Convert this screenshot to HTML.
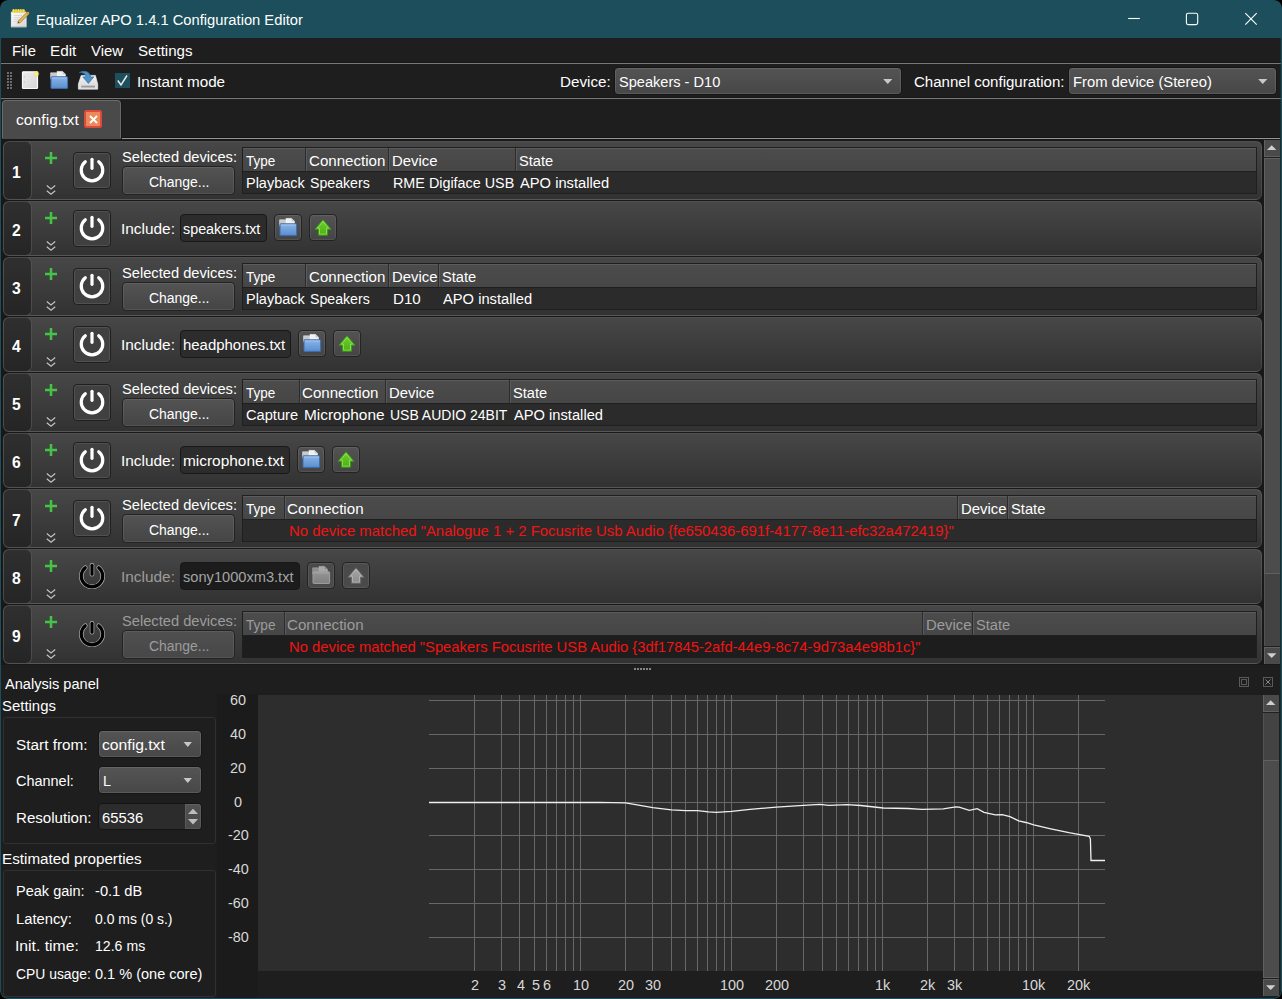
<!DOCTYPE html>
<html><head><meta charset="utf-8"><title>Equalizer APO 1.4.1 Configuration Editor</title>
<style>
html,body{margin:0;padding:0;background:#000;}
body{width:1282px;height:999px;position:relative;overflow:hidden;font-family:"Liberation Sans",sans-serif;}
.t{position:absolute;white-space:nowrap;line-height:20px;height:20px;transform-origin:0 0;}
.b{position:absolute;box-sizing:border-box;}
svg{position:absolute;overflow:visible;}

.row{position:absolute;box-sizing:border-box;border-radius:0 6px 6px 0;border:1px solid rgba(255,255,255,0.09);border-top-color:rgba(255,255,255,0.15);background:linear-gradient(#474747,#323232);}
.num{position:absolute;box-sizing:border-box;border-radius:6px;border:1px solid rgba(255,255,255,0.17);background:linear-gradient(#2f2f2f,#252525);}
.btn{position:absolute;box-sizing:border-box;border-radius:4px;border:1px solid #232323;background:linear-gradient(#535353,#454545);box-shadow:inset 0 0 0 1px rgba(255,255,255,0.08);}
.pbtn{position:absolute;box-sizing:border-box;border-radius:4px;border:1px solid #1f1f1f;background:#404040;box-shadow:inset 0 0 0 1px rgba(255,255,255,0.09);}
.inp{position:absolute;box-sizing:border-box;border-radius:4px;border:1px solid #181818;background:#2c2c2c;}
.tbl{position:absolute;box-sizing:border-box;border:1px solid #1f1f1f;background:#2b2b2b;}
.th{position:absolute;left:0;top:0;right:0;height:24px;background:linear-gradient(#4c4c4c,#464646);border-bottom:1px solid #1f1f1f;box-sizing:border-box;box-shadow:inset 0 1px 0 rgba(255,255,255,0.09);}
.sep{position:absolute;top:0;width:1px;height:23px;background:#2c2c2c;border-right:1px solid #5a5a5a;}
.combo{position:absolute;box-sizing:border-box;border-radius:4px;border:1px solid #151515;background:linear-gradient(#545454,#474747);box-shadow:inset 0 0 0 1px rgba(255,255,255,0.10);}

</style></head><body>
<div class="b" style="left:0;top:0;width:1282px;height:999px;background:#1e1e1e;border-radius:8px;overflow:hidden;"></div>
<div class="b" style="left:0;top:0;width:1282px;height:38px;background:#1c4f5b;border-radius:8px 8px 0 0;"></div>
<svg style="left:10px;top:8px" width="20" height="20" viewBox="0 0 20 20">
<defs><linearGradient id="gnote" x1="0" y1="0" x2="1" y2="1"><stop offset="0" stop-color="#ffffff"/><stop offset="1" stop-color="#d4d4d4"/></linearGradient></defs>
<rect x="1.3" y="4.2" width="14.8" height="14.6" fill="url(#gnote)" stroke="#f2f2f2" stroke-width="0.8"/>
<path d="M1.3 18.9 H16.1" stroke="#a8a8a8" stroke-width="0.8"/>
<g stroke="#cfcfcf" stroke-width="0.7"><line x1="3.6" y1="7.5" x2="12" y2="7.5"/><line x1="3.6" y1="9.5" x2="10" y2="9.5"/><line x1="3.6" y1="11.5" x2="8.5" y2="11.5"/><line x1="3.6" y1="13.5" x2="7" y2="13.5"/></g>
<rect x="2" y="1.6" width="13.2" height="3" rx="0.8" fill="#e3c41f"/>
<g stroke="#f7e873" stroke-width="0.9"><line x1="3.6" y1="1" x2="3.6" y2="4.6"/><line x1="6" y1="1" x2="6" y2="4.6"/><line x1="8.4" y1="1" x2="8.4" y2="4.6"/><line x1="10.8" y1="1" x2="10.8" y2="4.6"/><line x1="13.2" y1="1" x2="13.2" y2="4.6"/></g>
<path d="M8.6 14.4 L17.9 5.1" stroke="#b98a32" stroke-width="3.2" stroke-linecap="butt"/>
<path d="M8.8 14.2 L17.9 5.1" stroke="#e2bd6a" stroke-width="1.6"/>
<path d="M7.4 15.6 L8 13.2 L9.8 15 Z" fill="#7a4e10"/>
<circle cx="18" cy="5" r="1.3" fill="#d39a2a"/>
</svg>
<div class="t" style="left:36.19px;top:10px;font-size:15.5px;color:#fff;transform:scaleX(0.9500);">Equalizer APO 1.4.1 Configuration Editor</div>
<svg style="left:1120px;top:0" width="150" height="38" viewBox="0 0 150 38">
<g stroke="#fff" stroke-width="1.1" fill="none">
<line x1="8.2" y1="18.5" x2="19.8" y2="18.5"/>
<rect x="66.4" y="13.3" width="11.3" height="11.3" rx="1.8"/>
<path d="M125.3 13.2 L136.7 24.6 M136.7 13.2 L125.3 24.6"/>
</g></svg>
<div class="t" style="left:12.08px;top:41px;font-size:15.5px;color:#fff;transform:scaleX(0.9559);">File</div>
<div class="t" style="left:50.34px;top:41px;font-size:15.5px;color:#fff;transform:scaleX(0.9872);">Edit</div>
<div class="t" style="left:90.73px;top:41px;font-size:15.5px;color:#fff;transform:scaleX(0.9593);">View</div>
<div class="t" style="left:137.51px;top:41px;font-size:15.5px;color:#fff;transform:scaleX(0.9737);">Settings</div>
<div class="b" style="left:1px;top:62px;width:1280px;height:1px;background:#171717;"></div>
<div class="b" style="left:1px;top:63px;width:1280px;height:1px;background:#787878;"></div>
<svg style="left:7px;top:72px" width="6" height="18" viewBox="0 0 6 18" shape-rendering="crispEdges"><g fill="#6c6c6c"><rect x="0" y="0" width="2" height="2"/><rect x="0" y="3" width="2" height="2"/><rect x="0" y="6" width="2" height="2"/><rect x="0" y="9" width="2" height="2"/><rect x="0" y="12" width="2" height="2"/><rect x="0" y="15" width="2" height="2"/><rect x="3" y="0" width="2" height="2"/><rect x="3" y="3" width="2" height="2"/><rect x="3" y="6" width="2" height="2"/><rect x="3" y="9" width="2" height="2"/><rect x="3" y="12" width="2" height="2"/><rect x="3" y="15" width="2" height="2"/></g></svg>
<svg style="left:22px;top:71px" width="16" height="18" viewBox="0 0 16 18">
<defs><linearGradient id="gdoc" x1="0" y1="0" x2="1" y2="1"><stop offset="0" stop-color="#ececec"/><stop offset="1" stop-color="#d6d6d6"/></linearGradient>
<radialGradient id="gglow"><stop offset="0" stop-color="#fffde0"/><stop offset="0.45" stop-color="#f2e66a"/><stop offset="1" stop-color="#f2e66a" stop-opacity="0"/></radialGradient></defs>
<rect x="0.5" y="0.8" width="15" height="16.7" rx="0.8" fill="url(#gdoc)" stroke="#fbfbfb" stroke-width="1.2"/>
<circle cx="14.3" cy="2.8" r="3.4" fill="url(#gglow)"/>
<rect x="1.6" y="5.5" width="1.2" height="0.8" fill="#aaa"/><rect x="1.6" y="10.5" width="1.2" height="0.8" fill="#aaa"/>
</svg>
<svg style="left:50.3px;top:70.5px" width="18" height="18" viewBox="0 0 18 18">
<defs><linearGradient id="gf1" x1="0" y1="0" x2="0" y2="1"><stop offset="0" stop-color="#8ab4e6"/><stop offset="1" stop-color="#5b8fd0"/></linearGradient></defs>
<path d="M0.6 1.8 H6.5 V8 H0.6 Z" fill="#c9c9c9" stroke="#e6e6e6" stroke-width="0.6"/>
<path d="M7 0.4 H12.6 L15.4 3.2 V8 H7 Z" fill="#f1f1f1" stroke="#ffffff" stroke-width="0.6"/>
<path d="M12.6 0.4 V3.2 H15.4 Z" fill="#c4c4c4"/>
<rect x="1" y="5.8" width="16.6" height="11.6" rx="0.6" fill="url(#gf1)" stroke="#3c6db4" stroke-width="1"/>
<path d="M2 7 H16.6" stroke="#b9d3f3" stroke-width="0.9" opacity="0.8"/>
</svg>
<svg style="left:78px;top:70px" width="20" height="20" viewBox="0 0 20 20">
<defs><linearGradient id="gtray" x1="0" y1="0" x2="0" y2="1"><stop offset="0" stop-color="#f4f4f4"/><stop offset="1" stop-color="#d2d2d2"/></linearGradient></defs>
<path d="M3.2 5.4 H17.4 L19.7 14 V19.2 H0.4 V14 Z" fill="url(#gtray)" stroke="#f8f8f8" stroke-width="0.6"/>
<path d="M0.8 14.2 H19.3 V18.9 H0.8 Z" fill="#e1e1e1"/>
<rect x="3.2" y="15.6" width="13.8" height="1.9" fill="#9c9c9c"/>
<path d="M1.4 2.6 C5 0.4 11.6 0.6 12.6 6.9 H15.8 L10.4 13.4 L4.8 6.9 H8 C7.6 3.6 4.6 2.4 1.4 2.6 Z" fill="#4f92c8" stroke="#2f6ea6" stroke-width="0.7"/>
</svg>
<div class="b" style="left:115px;top:73px;width:15px;height:15px;background:#1d4f5c;"></div>
<svg style="left:115px;top:73px" width="15" height="15" viewBox="0 0 15 15"><path d="M2.8 7.5 L6 12 L12 2.5" stroke="#e8e8e8" stroke-width="1.5" fill="none"/></svg>
<div class="t" style="left:136.69px;top:72px;font-size:15.5px;color:#fff;transform:scaleX(0.9830);">Instant mode</div>
<div class="t" style="left:560.35px;top:72px;font-size:15.5px;color:#fff;transform:scaleX(0.9796);">Device:</div>
<div class="combo" style="left:614px;top:67px;width:288px;height:28px"></div>
<div class="t" style="left:618.84px;top:72px;font-size:15.5px;color:#fff;transform:scaleX(0.9400);">Speakers - D10</div>
<svg style="left:883px;top:79px" width="9.5" height="5" viewBox="0 0 11 6"><path d="M0 0 H11 L5.5 6 Z" fill="#c8c8c8"/></svg>
<div class="t" style="left:913.84px;top:72px;font-size:15.5px;color:#fff;transform:scaleX(0.9705);">Channel configuration:</div>
<div class="combo" style="left:1068px;top:67px;width:209px;height:28px"></div>
<div class="t" style="left:1073.09px;top:72px;font-size:15.5px;color:#fff;transform:scaleX(0.9537);">From device (Stereo)</div>
<svg style="left:1258px;top:79px" width="9.5" height="5" viewBox="0 0 11 6"><path d="M0 0 H11 L5.5 6 Z" fill="#c8c8c8"/></svg>
<div class="b" style="left:1px;top:97px;width:1280px;height:1px;background:#171717;"></div>
<div class="b" style="left:1px;top:98px;width:1280px;height:1px;background:#787878;"></div>
<div class="b" style="left:2px;top:100px;width:119px;height:38px;background:#4a4a4a;border:1px solid #6a6a6a;border-bottom:none;border-radius:4px 4px 0 0;"></div>
<div class="t" style="left:15.53px;top:110px;font-size:15.5px;color:#fff;transform:scaleX(1.0121);">config.txt</div>
<div class="b" style="left:84px;top:110px;width:18px;height:18px;background:#ea8a5c;border:2px solid #dc4a3c;border-radius:2.5px;"></div>
<svg style="left:84.5px;top:110.5px" width="17" height="17" viewBox="0 0 17 17"><path d="M5 5 L12 12 M12 5 L5 12" stroke="#fff" stroke-width="1.8" fill="none"/></svg>
<div class="b" style="left:121px;top:137px;width:1159px;height:1px;background:#151515;"></div>
<div class="b" style="left:121px;top:100px;width:1px;height:38px;background:#171717;"></div>
<div class="b" style="left:122px;top:138px;width:1158px;height:1px;background:#969696;"></div>
<div class="b" style="left:2px;top:138px;width:119px;height:1px;background:#4a4a4a;"></div>
<div class="b" style="left:1px;top:139px;width:1279px;height:526px;background:#181818;"></div>
<div class="row" style="left:26px;top:141px;width:1236px;height:59px"></div>
<div class="num" style="left:3px;top:141px;width:29px;height:59px"></div>
<div class="t" style="left:12.07px;top:162px;font-size:16.5px;color:#fff;transform:scaleX(0.9500);font-weight:bold;">1</div>
<svg style="left:44px;top:151px" width="14" height="14" viewBox="0 0 14 14"><path d="M7 1 V13 M1 7 H13" stroke="#46c246" stroke-width="2.5" fill="none"/></svg>
<svg style="left:45px;top:184.4px" width="12" height="12" viewBox="0 0 12 12"><path d="M1.8 1.5 L6 5 L10.2 1.5 M1.8 6.8 L6 10.3 L10.2 6.8" stroke="#c4c4c4" stroke-width="1.15" fill="none"/></svg>
<div class="pbtn" style="left:73px;top:152px;width:38px;height:37px"></div>
<svg style="left:77.1px;top:155.0px" width="30" height="30" viewBox="0 0 30 30">
<g fill="none" stroke="#fff" stroke-width="3.2" stroke-linecap="round">
<path d="M8.3 6.7 A10.75 10.75 0 1 0 21.7 6.7"/><line x1="15" y1="4.3" x2="15" y2="13.3"/></g></svg>
<div class="t" style="left:121.63px;top:147px;font-size:15.5px;color:#fff;transform:scaleX(0.9467);">Selected devices:</div>
<div class="btn" style="left:122px;top:166px;width:113px;height:29px;"></div>
<div class="t" style="left:148.59px;top:172px;font-size:15.5px;color:#fff;transform:scaleX(0.8998);">Change...</div>
<div class="tbl" style="left:242px;top:147px;width:1015px;height:47px;background:#2b2b2b"><div class="th"></div><div class="sep" style="left:62px"></div><div class="sep" style="left:145px"></div><div class="sep" style="left:272px"></div></div>
<div class="t" style="left:246.30px;top:151px;font-size:15.5px;color:#fff;transform:scaleX(0.8707);">Type</div>
<div class="t" style="left:308.73px;top:151px;font-size:15.5px;color:#fff;transform:scaleX(0.9736);">Connection</div>
<div class="t" style="left:392.28px;top:151px;font-size:15.5px;color:#fff;transform:scaleX(0.9600);">Device</div>
<div class="t" style="left:519.03px;top:151px;font-size:15.5px;color:#fff;transform:scaleX(0.9454);">State</div>
<div class="t" style="left:246.31px;top:173px;font-size:15.5px;color:#fff;transform:scaleX(0.9328);">Playback</div>
<div class="t" style="left:309.86px;top:173px;font-size:15.5px;color:#fff;transform:scaleX(0.9125);">Speakers</div>
<div class="t" style="left:393.02px;top:173px;font-size:15.5px;color:#fff;transform:scaleX(0.9260);">RME Digiface USB</div>
<div class="t" style="left:520.17px;top:173px;font-size:15.5px;color:#fff;transform:scaleX(0.9485);">APO installed</div>
<div class="row" style="left:26px;top:201px;width:1236px;height:55px"></div>
<div class="num" style="left:3px;top:201px;width:29px;height:55px"></div>
<div class="t" style="left:12.38px;top:220px;font-size:16.5px;color:#fff;transform:scaleX(0.9500);font-weight:bold;">2</div>
<svg style="left:44px;top:211px" width="14" height="14" viewBox="0 0 14 14"><path d="M7 1 V13 M1 7 H13" stroke="#46c246" stroke-width="2.5" fill="none"/></svg>
<svg style="left:45px;top:240.4px" width="12" height="12" viewBox="0 0 12 12"><path d="M1.8 1.5 L6 5 L10.2 1.5 M1.8 6.8 L6 10.3 L10.2 6.8" stroke="#c4c4c4" stroke-width="1.15" fill="none"/></svg>
<div class="pbtn" style="left:73px;top:210px;width:38px;height:37px"></div>
<svg style="left:77.1px;top:213.0px" width="30" height="30" viewBox="0 0 30 30">
<g fill="none" stroke="#fff" stroke-width="3.2" stroke-linecap="round">
<path d="M8.3 6.7 A10.75 10.75 0 1 0 21.7 6.7"/><line x1="15" y1="4.3" x2="15" y2="13.3"/></g></svg>
<div class="t" style="left:121.38px;top:219px;font-size:15.5px;color:#fff;transform:scaleX(0.9933);">Include:</div>
<div class="inp" style="left:180px;top:214px;width:87px;height:28px;"></div>
<div class="t" style="left:183.00px;top:219px;font-size:15.5px;color:#fff;transform:scaleX(0.9251);">speakers.txt</div>
<div class="btn" style="left:274px;top:214px;width:28px;height:27px;"></div>
<svg style="left:279px;top:218px" width="18" height="18" viewBox="0 0 18 18">
<defs><linearGradient id="gf2" x1="0" y1="0" x2="0" y2="1"><stop offset="0" stop-color="#8ab4e6"/><stop offset="1" stop-color="#5b8fd0"/></linearGradient></defs>
<path d="M0.6 1.8 H6.5 V8 H0.6 Z" fill="#c9c9c9" stroke="#e6e6e6" stroke-width="0.6"/>
<path d="M7 0.4 H12.6 L15.4 3.2 V8 H7 Z" fill="#f1f1f1" stroke="#ffffff" stroke-width="0.6"/>
<path d="M12.6 0.4 V3.2 H15.4 Z" fill="#c4c4c4"/>
<rect x="1" y="5.8" width="16.6" height="11.6" rx="0.6" fill="url(#gf2)" stroke="#3c6db4" stroke-width="1"/>
<path d="M2 7 H16.6" stroke="#b9d3f3" stroke-width="0.9" opacity="0.8"/>
</svg>
<div class="btn" style="left:309px;top:214px;width:28px;height:27px;"></div>
<svg style="left:314px;top:219.3px" width="18" height="17" viewBox="0 0 18 17"><defs><linearGradient id="gu1" x1="0" y1="0" x2="0" y2="1"><stop offset="0" stop-color="#6ed02e"/><stop offset="1" stop-color="#4cb012"/></linearGradient></defs><path d="M9 0.8 L17 10.2 H13.6 V16.2 H4.4 V10.2 H1 Z" fill="url(#gu1)" stroke="#3c9a14" stroke-width="1" stroke-linejoin="round"/><path d="M9 2.6 L14.6 9.2 H12.5 V15.1 H5.5 V9.2 H3.4 Z" fill="none" stroke="#a2e878" stroke-width="0.9" opacity="0.75"/></svg>
<div class="row" style="left:26px;top:257px;width:1236px;height:59px"></div>
<div class="num" style="left:3px;top:257px;width:29px;height:59px"></div>
<div class="t" style="left:12.44px;top:278px;font-size:16.5px;color:#fff;transform:scaleX(0.9500);font-weight:bold;">3</div>
<svg style="left:44px;top:267px" width="14" height="14" viewBox="0 0 14 14"><path d="M7 1 V13 M1 7 H13" stroke="#46c246" stroke-width="2.5" fill="none"/></svg>
<svg style="left:45px;top:300.4px" width="12" height="12" viewBox="0 0 12 12"><path d="M1.8 1.5 L6 5 L10.2 1.5 M1.8 6.8 L6 10.3 L10.2 6.8" stroke="#c4c4c4" stroke-width="1.15" fill="none"/></svg>
<div class="pbtn" style="left:73px;top:268px;width:38px;height:37px"></div>
<svg style="left:77.1px;top:271.0px" width="30" height="30" viewBox="0 0 30 30">
<g fill="none" stroke="#fff" stroke-width="3.2" stroke-linecap="round">
<path d="M8.3 6.7 A10.75 10.75 0 1 0 21.7 6.7"/><line x1="15" y1="4.3" x2="15" y2="13.3"/></g></svg>
<div class="t" style="left:121.63px;top:263px;font-size:15.5px;color:#fff;transform:scaleX(0.9467);">Selected devices:</div>
<div class="btn" style="left:122px;top:282px;width:113px;height:29px;"></div>
<div class="t" style="left:148.59px;top:288px;font-size:15.5px;color:#fff;transform:scaleX(0.8998);">Change...</div>
<div class="tbl" style="left:242px;top:263px;width:1015px;height:47px;background:#2b2b2b"><div class="th"></div><div class="sep" style="left:62px"></div><div class="sep" style="left:145px"></div><div class="sep" style="left:195px"></div></div>
<div class="t" style="left:246.30px;top:267px;font-size:15.5px;color:#fff;transform:scaleX(0.8707);">Type</div>
<div class="t" style="left:308.73px;top:267px;font-size:15.5px;color:#fff;transform:scaleX(0.9736);">Connection</div>
<div class="t" style="left:392.28px;top:267px;font-size:15.5px;color:#fff;transform:scaleX(0.9600);">Device</div>
<div class="t" style="left:442.03px;top:267px;font-size:15.5px;color:#fff;transform:scaleX(0.9454);">State</div>
<div class="t" style="left:246.31px;top:289px;font-size:15.5px;color:#fff;transform:scaleX(0.9328);">Playback</div>
<div class="t" style="left:309.86px;top:289px;font-size:15.5px;color:#fff;transform:scaleX(0.9125);">Speakers</div>
<div class="t" style="left:392.96px;top:289px;font-size:15.5px;color:#fff;transform:scaleX(0.9752);">D10</div>
<div class="t" style="left:443.17px;top:289px;font-size:15.5px;color:#fff;transform:scaleX(0.9485);">APO installed</div>
<div class="row" style="left:26px;top:317px;width:1236px;height:55px"></div>
<div class="num" style="left:3px;top:317px;width:29px;height:55px"></div>
<div class="t" style="left:12.26px;top:336px;font-size:16.5px;color:#fff;transform:scaleX(0.9500);font-weight:bold;">4</div>
<svg style="left:44px;top:327px" width="14" height="14" viewBox="0 0 14 14"><path d="M7 1 V13 M1 7 H13" stroke="#46c246" stroke-width="2.5" fill="none"/></svg>
<svg style="left:45px;top:356.4px" width="12" height="12" viewBox="0 0 12 12"><path d="M1.8 1.5 L6 5 L10.2 1.5 M1.8 6.8 L6 10.3 L10.2 6.8" stroke="#c4c4c4" stroke-width="1.15" fill="none"/></svg>
<div class="pbtn" style="left:73px;top:326px;width:38px;height:37px"></div>
<svg style="left:77.1px;top:329.0px" width="30" height="30" viewBox="0 0 30 30">
<g fill="none" stroke="#fff" stroke-width="3.2" stroke-linecap="round">
<path d="M8.3 6.7 A10.75 10.75 0 1 0 21.7 6.7"/><line x1="15" y1="4.3" x2="15" y2="13.3"/></g></svg>
<div class="t" style="left:121.38px;top:335px;font-size:15.5px;color:#fff;transform:scaleX(0.9933);">Include:</div>
<div class="inp" style="left:180px;top:330px;width:111px;height:28px;"></div>
<div class="t" style="left:182.96px;top:335px;font-size:15.5px;color:#fff;transform:scaleX(0.9636);">headphones.txt</div>
<div class="btn" style="left:298px;top:330px;width:28px;height:27px;"></div>
<svg style="left:303px;top:334px" width="18" height="18" viewBox="0 0 18 18">
<defs><linearGradient id="gf3" x1="0" y1="0" x2="0" y2="1"><stop offset="0" stop-color="#8ab4e6"/><stop offset="1" stop-color="#5b8fd0"/></linearGradient></defs>
<path d="M0.6 1.8 H6.5 V8 H0.6 Z" fill="#c9c9c9" stroke="#e6e6e6" stroke-width="0.6"/>
<path d="M7 0.4 H12.6 L15.4 3.2 V8 H7 Z" fill="#f1f1f1" stroke="#ffffff" stroke-width="0.6"/>
<path d="M12.6 0.4 V3.2 H15.4 Z" fill="#c4c4c4"/>
<rect x="1" y="5.8" width="16.6" height="11.6" rx="0.6" fill="url(#gf3)" stroke="#3c6db4" stroke-width="1"/>
<path d="M2 7 H16.6" stroke="#b9d3f3" stroke-width="0.9" opacity="0.8"/>
</svg>
<div class="btn" style="left:333px;top:330px;width:28px;height:27px;"></div>
<svg style="left:338px;top:335.3px" width="18" height="17" viewBox="0 0 18 17"><defs><linearGradient id="gu2" x1="0" y1="0" x2="0" y2="1"><stop offset="0" stop-color="#6ed02e"/><stop offset="1" stop-color="#4cb012"/></linearGradient></defs><path d="M9 0.8 L17 10.2 H13.6 V16.2 H4.4 V10.2 H1 Z" fill="url(#gu2)" stroke="#3c9a14" stroke-width="1" stroke-linejoin="round"/><path d="M9 2.6 L14.6 9.2 H12.5 V15.1 H5.5 V9.2 H3.4 Z" fill="none" stroke="#a2e878" stroke-width="0.9" opacity="0.75"/></svg>
<div class="row" style="left:26px;top:373px;width:1236px;height:59px"></div>
<div class="num" style="left:3px;top:373px;width:29px;height:59px"></div>
<div class="t" style="left:12.32px;top:394px;font-size:16.5px;color:#fff;transform:scaleX(0.9500);font-weight:bold;">5</div>
<svg style="left:44px;top:383px" width="14" height="14" viewBox="0 0 14 14"><path d="M7 1 V13 M1 7 H13" stroke="#46c246" stroke-width="2.5" fill="none"/></svg>
<svg style="left:45px;top:416.4px" width="12" height="12" viewBox="0 0 12 12"><path d="M1.8 1.5 L6 5 L10.2 1.5 M1.8 6.8 L6 10.3 L10.2 6.8" stroke="#c4c4c4" stroke-width="1.15" fill="none"/></svg>
<div class="pbtn" style="left:73px;top:384px;width:38px;height:37px"></div>
<svg style="left:77.1px;top:387.0px" width="30" height="30" viewBox="0 0 30 30">
<g fill="none" stroke="#fff" stroke-width="3.2" stroke-linecap="round">
<path d="M8.3 6.7 A10.75 10.75 0 1 0 21.7 6.7"/><line x1="15" y1="4.3" x2="15" y2="13.3"/></g></svg>
<div class="t" style="left:121.63px;top:379px;font-size:15.5px;color:#fff;transform:scaleX(0.9467);">Selected devices:</div>
<div class="btn" style="left:122px;top:398px;width:113px;height:29px;"></div>
<div class="t" style="left:148.59px;top:404px;font-size:15.5px;color:#fff;transform:scaleX(0.8998);">Change...</div>
<div class="tbl" style="left:242px;top:379px;width:1015px;height:47px;background:#2b2b2b"><div class="th"></div><div class="sep" style="left:56px"></div><div class="sep" style="left:142px"></div><div class="sep" style="left:266px"></div></div>
<div class="t" style="left:246.10px;top:383px;font-size:15.5px;color:#fff;transform:scaleX(0.8707);">Type</div>
<div class="t" style="left:302.33px;top:383px;font-size:15.5px;color:#fff;transform:scaleX(0.9749);">Connection</div>
<div class="t" style="left:389.08px;top:383px;font-size:15.5px;color:#fff;transform:scaleX(0.9578);">Device</div>
<div class="t" style="left:512.63px;top:383px;font-size:15.5px;color:#fff;transform:scaleX(0.9454);">State</div>
<div class="t" style="left:245.76px;top:405px;font-size:15.5px;color:#fff;transform:scaleX(0.9447);">Capture</div>
<div class="t" style="left:303.94px;top:405px;font-size:15.5px;color:#fff;transform:scaleX(0.9946);">Microphone</div>
<div class="t" style="left:390.12px;top:405px;font-size:15.5px;color:#fff;transform:scaleX(0.9020);">USB AUDIO 24BIT</div>
<div class="t" style="left:514.17px;top:405px;font-size:15.5px;color:#fff;transform:scaleX(0.9475);">APO installed</div>
<div class="row" style="left:26px;top:433px;width:1236px;height:55px"></div>
<div class="num" style="left:3px;top:433px;width:29px;height:55px"></div>
<div class="t" style="left:12.34px;top:452px;font-size:16.5px;color:#fff;transform:scaleX(0.9500);font-weight:bold;">6</div>
<svg style="left:44px;top:443px" width="14" height="14" viewBox="0 0 14 14"><path d="M7 1 V13 M1 7 H13" stroke="#46c246" stroke-width="2.5" fill="none"/></svg>
<svg style="left:45px;top:472.4px" width="12" height="12" viewBox="0 0 12 12"><path d="M1.8 1.5 L6 5 L10.2 1.5 M1.8 6.8 L6 10.3 L10.2 6.8" stroke="#c4c4c4" stroke-width="1.15" fill="none"/></svg>
<div class="pbtn" style="left:73px;top:442px;width:38px;height:37px"></div>
<svg style="left:77.1px;top:445.0px" width="30" height="30" viewBox="0 0 30 30">
<g fill="none" stroke="#fff" stroke-width="3.2" stroke-linecap="round">
<path d="M8.3 6.7 A10.75 10.75 0 1 0 21.7 6.7"/><line x1="15" y1="4.3" x2="15" y2="13.3"/></g></svg>
<div class="t" style="left:121.38px;top:451px;font-size:15.5px;color:#fff;transform:scaleX(0.9933);">Include:</div>
<div class="inp" style="left:180px;top:446px;width:110px;height:28px;"></div>
<div class="t" style="left:182.98px;top:451px;font-size:15.5px;color:#fff;transform:scaleX(0.9949);">microphone.txt</div>
<div class="btn" style="left:297px;top:446px;width:28px;height:27px;"></div>
<svg style="left:302px;top:450px" width="18" height="18" viewBox="0 0 18 18">
<defs><linearGradient id="gf4" x1="0" y1="0" x2="0" y2="1"><stop offset="0" stop-color="#8ab4e6"/><stop offset="1" stop-color="#5b8fd0"/></linearGradient></defs>
<path d="M0.6 1.8 H6.5 V8 H0.6 Z" fill="#c9c9c9" stroke="#e6e6e6" stroke-width="0.6"/>
<path d="M7 0.4 H12.6 L15.4 3.2 V8 H7 Z" fill="#f1f1f1" stroke="#ffffff" stroke-width="0.6"/>
<path d="M12.6 0.4 V3.2 H15.4 Z" fill="#c4c4c4"/>
<rect x="1" y="5.8" width="16.6" height="11.6" rx="0.6" fill="url(#gf4)" stroke="#3c6db4" stroke-width="1"/>
<path d="M2 7 H16.6" stroke="#b9d3f3" stroke-width="0.9" opacity="0.8"/>
</svg>
<div class="btn" style="left:332px;top:446px;width:28px;height:27px;"></div>
<svg style="left:337px;top:451.3px" width="18" height="17" viewBox="0 0 18 17"><defs><linearGradient id="gu3" x1="0" y1="0" x2="0" y2="1"><stop offset="0" stop-color="#6ed02e"/><stop offset="1" stop-color="#4cb012"/></linearGradient></defs><path d="M9 0.8 L17 10.2 H13.6 V16.2 H4.4 V10.2 H1 Z" fill="url(#gu3)" stroke="#3c9a14" stroke-width="1" stroke-linejoin="round"/><path d="M9 2.6 L14.6 9.2 H12.5 V15.1 H5.5 V9.2 H3.4 Z" fill="none" stroke="#a2e878" stroke-width="0.9" opacity="0.75"/></svg>
<div class="row" style="left:26px;top:489px;width:1236px;height:59px"></div>
<div class="num" style="left:3px;top:489px;width:29px;height:59px"></div>
<div class="t" style="left:12.35px;top:510px;font-size:16.5px;color:#fff;transform:scaleX(0.9500);font-weight:bold;">7</div>
<svg style="left:44px;top:499px" width="14" height="14" viewBox="0 0 14 14"><path d="M7 1 V13 M1 7 H13" stroke="#46c246" stroke-width="2.5" fill="none"/></svg>
<svg style="left:45px;top:532.4px" width="12" height="12" viewBox="0 0 12 12"><path d="M1.8 1.5 L6 5 L10.2 1.5 M1.8 6.8 L6 10.3 L10.2 6.8" stroke="#c4c4c4" stroke-width="1.15" fill="none"/></svg>
<div class="pbtn" style="left:73px;top:500px;width:38px;height:37px"></div>
<svg style="left:77.1px;top:503.0px" width="30" height="30" viewBox="0 0 30 30">
<g fill="none" stroke="#fff" stroke-width="3.2" stroke-linecap="round">
<path d="M8.3 6.7 A10.75 10.75 0 1 0 21.7 6.7"/><line x1="15" y1="4.3" x2="15" y2="13.3"/></g></svg>
<div class="t" style="left:121.63px;top:495px;font-size:15.5px;color:#fff;transform:scaleX(0.9467);">Selected devices:</div>
<div class="btn" style="left:122px;top:514px;width:113px;height:29px;"></div>
<div class="t" style="left:148.59px;top:520px;font-size:15.5px;color:#fff;transform:scaleX(0.8998);">Change...</div>
<div class="tbl" style="left:242px;top:495px;width:1015px;height:47px;background:#2b2b2b"><div class="th"></div><div class="sep" style="left:41px"></div><div class="sep" style="left:714px"></div><div class="sep" style="left:764px"></div></div>
<div class="t" style="left:246.09px;top:499px;font-size:15.5px;color:#fff;transform:scaleX(0.8767);">Type</div>
<div class="t" style="left:287.43px;top:499px;font-size:15.5px;color:#fff;transform:scaleX(0.9762);">Connection</div>
<div class="t" style="left:961.18px;top:499px;font-size:15.5px;color:#fff;transform:scaleX(0.9622);">Device</div>
<div class="t" style="left:1010.83px;top:499px;font-size:15.5px;color:#fff;transform:scaleX(0.9483);">State</div>
<div class="t" style="left:289.38px;top:521px;font-size:15.5px;color:#f01414;transform:scaleX(0.9609);">No device matched &quot;Analogue 1 + 2 Focusrite Usb Audio {fe650436-691f-4177-8e11-efc32a472419}&quot;</div>
<div class="row" style="left:26px;top:549px;width:1236px;height:55px"></div>
<div class="num" style="left:3px;top:549px;width:29px;height:55px"></div>
<div class="t" style="left:12.33px;top:568px;font-size:16.5px;color:#fff;transform:scaleX(0.9500);font-weight:bold;">8</div>
<svg style="left:44px;top:559px" width="14" height="14" viewBox="0 0 14 14"><path d="M7 1 V13 M1 7 H13" stroke="#46c246" stroke-width="2.5" fill="none"/></svg>
<svg style="left:45px;top:588.4px" width="12" height="12" viewBox="0 0 12 12"><path d="M1.8 1.5 L6 5 L10.2 1.5 M1.8 6.8 L6 10.3 L10.2 6.8" stroke="#c4c4c4" stroke-width="1.15" fill="none"/></svg>
<svg style="left:77.1px;top:561.0px" width="30" height="30" viewBox="0 0 30 30">
<g fill="none" stroke="#b2b2b2" stroke-width="4.5" stroke-linecap="round"><path d="M8.3 6.7 A10.75 10.75 0 1 0 21.7 6.7"/><line x1="15" y1="4.3" x2="15" y2="13.3"/></g><g fill="none" stroke="#000" stroke-width="3.1" stroke-linecap="round">
<path d="M8.3 6.7 A10.75 10.75 0 1 0 21.7 6.7"/><line x1="15" y1="4.3" x2="15" y2="13.3"/></g></svg>
<div class="t" style="left:121.38px;top:567px;font-size:15.5px;color:#9c9c9c;transform:scaleX(0.9933);">Include:</div>
<div class="inp" style="left:180px;top:562px;width:120px;height:28px;background:#1c1c1c;"></div>
<div class="t" style="left:182.99px;top:567px;font-size:15.5px;color:#a4a4a4;transform:scaleX(0.9432);">sony1000xm3.txt</div>
<div class="btn" style="left:307px;top:562px;width:28px;height:27px;background:#4a4a4a;"></div>
<svg style="left:312px;top:566px" width="18" height="18" viewBox="0 0 18 18">
<defs><linearGradient id="gf5" x1="0" y1="0" x2="0" y2="1"><stop offset="0" stop-color="#959595"/><stop offset="1" stop-color="#808080"/></linearGradient></defs>
<path d="M0.6 1.8 H6.5 V8 H0.6 Z" fill="#8e8e8e" stroke="#a2a2a2" stroke-width="0.6"/>
<path d="M7 0.4 H12.6 L15.4 3.2 V8 H7 Z" fill="#a8a8a8" stroke="#b4b4b4" stroke-width="0.6"/>
<path d="M12.6 0.4 V3.2 H15.4 Z" fill="#8a8a8a"/>
<rect x="1" y="5.8" width="16.6" height="11.6" rx="0.6" fill="url(#gf5)" stroke="#a0a0a0" stroke-width="1"/>
<path d="M2 7 H16.6" stroke="#adadad" stroke-width="0.9" opacity="0.8"/>
</svg>
<div class="btn" style="left:342px;top:562px;width:28px;height:27px;background:#4a4a4a;"></div>
<svg style="left:347px;top:567.3px" width="18" height="17" viewBox="0 0 18 17"><defs><linearGradient id="gu4" x1="0" y1="0" x2="0" y2="1"><stop offset="0" stop-color="#a6a6a6"/><stop offset="1" stop-color="#8c8c8c"/></linearGradient></defs><path d="M9 0.8 L17 10.2 H13.6 V16.2 H4.4 V10.2 H1 Z" fill="url(#gu4)" stroke="#6a6a6a" stroke-width="1" stroke-linejoin="round"/><path d="M9 2.6 L14.6 9.2 H12.5 V15.1 H5.5 V9.2 H3.4 Z" fill="none" stroke="#bdbdbd" stroke-width="0.9" opacity="0.75"/></svg>
<div class="row" style="left:26px;top:605px;width:1236px;height:59px"></div>
<div class="num" style="left:3px;top:605px;width:29px;height:59px"></div>
<div class="t" style="left:12.36px;top:626px;font-size:16.5px;color:#fff;transform:scaleX(0.9500);font-weight:bold;">9</div>
<svg style="left:44px;top:615px" width="14" height="14" viewBox="0 0 14 14"><path d="M7 1 V13 M1 7 H13" stroke="#46c246" stroke-width="2.5" fill="none"/></svg>
<svg style="left:45px;top:648.4px" width="12" height="12" viewBox="0 0 12 12"><path d="M1.8 1.5 L6 5 L10.2 1.5 M1.8 6.8 L6 10.3 L10.2 6.8" stroke="#c4c4c4" stroke-width="1.15" fill="none"/></svg>
<svg style="left:77.1px;top:619.0px" width="30" height="30" viewBox="0 0 30 30">
<g fill="none" stroke="#b2b2b2" stroke-width="4.5" stroke-linecap="round"><path d="M8.3 6.7 A10.75 10.75 0 1 0 21.7 6.7"/><line x1="15" y1="4.3" x2="15" y2="13.3"/></g><g fill="none" stroke="#000" stroke-width="3.1" stroke-linecap="round">
<path d="M8.3 6.7 A10.75 10.75 0 1 0 21.7 6.7"/><line x1="15" y1="4.3" x2="15" y2="13.3"/></g></svg>
<div class="t" style="left:121.63px;top:611px;font-size:15.5px;color:#9c9c9c;transform:scaleX(0.9467);">Selected devices:</div>
<div class="btn" style="left:122px;top:630px;width:113px;height:29px;background:linear-gradient(#505050,#474747);"></div>
<div class="t" style="left:148.59px;top:636px;font-size:15.5px;color:#9c9c9c;transform:scaleX(0.8998);">Change...</div>
<div class="tbl" style="left:242px;top:611px;width:1015px;height:47px;background:#1d1d1d"><div class="th"></div><div class="sep" style="left:41px"></div><div class="sep" style="left:679px"></div><div class="sep" style="left:729px"></div></div>
<div class="t" style="left:246.09px;top:615px;font-size:15.5px;color:#9c9c9c;transform:scaleX(0.8767);">Type</div>
<div class="t" style="left:287.43px;top:615px;font-size:15.5px;color:#9c9c9c;transform:scaleX(0.9762);">Connection</div>
<div class="t" style="left:926.18px;top:615px;font-size:15.5px;color:#9c9c9c;transform:scaleX(0.9622);">Device</div>
<div class="t" style="left:975.83px;top:615px;font-size:15.5px;color:#9c9c9c;transform:scaleX(0.9454);">State</div>
<div class="t" style="left:289.39px;top:637px;font-size:15.5px;color:#f01414;transform:scaleX(0.9546);">No device matched &quot;Speakers Focusrite USB Audio {3df17845-2afd-44e9-8c74-9d73a4e98b1c}&quot;</div>
<div class="b" style="left:1264px;top:140px;width:16px;height:524px;background:#434343;border-left:1px solid #525252;"></div>
<div class="b" style="left:1264px;top:158px;width:16px;height:416px;background:#4c4c4c;border:1px solid #606060;border-width:1px 0 1px 1px;"></div>
<div class="b" style="left:1264px;top:140px;width:16px;height:17px;background:#4a4a4a;border:1px solid #606060;border-width:0 0 1px 1px"></div>
<div class="b" style="left:1264px;top:157px;width:16px;height:1px;background:#202020;"></div>
<div class="b" style="left:1264px;top:647px;width:16px;height:17px;background:#4a4a4a;border:1px solid #606060;border-width:1px 0 0 1px"></div>
<div class="b" style="left:1264px;top:646px;width:16px;height:1px;background:#202020;"></div>
<svg style="left:1266.8px;top:144.8px" width="9.4" height="5.3" viewBox="0 0 10 5"><path d="M0 5 H10 L5 0 Z" fill="#cfcfcf"/></svg>
<svg style="left:1266.8px;top:653.2px" width="9.4" height="5.3" viewBox="0 0 10 5"><path d="M0 0 H10 L5 5 Z" fill="#cfcfcf"/></svg>
<svg style="left:634px;top:668px" width="18" height="2" viewBox="0 0 18 2" shape-rendering="crispEdges"><g fill="#858585"><rect x="0" y="0" width="2" height="2"/><rect x="3" y="0" width="2" height="2"/><rect x="6" y="0" width="2" height="2"/><rect x="9" y="0" width="2" height="2"/><rect x="12" y="0" width="2" height="2"/><rect x="15" y="0" width="2" height="2"/></g></svg>
<div class="t" style="left:5.07px;top:674px;font-size:15.5px;color:#fff;transform:scaleX(0.9405);">Analysis panel</div>
<div class="t" style="left:1.92px;top:696px;font-size:15.5px;color:#fff;transform:scaleX(0.9627);">Settings</div>
<div class="b" style="left:3px;top:717px;width:213px;height:127px;border:1px solid #303030;border-radius:3px;"></div>
<div class="t" style="left:15.60px;top:735px;font-size:15.5px;color:#fff;transform:scaleX(0.9897);">Start from:</div>
<div class="combo" style="left:98px;top:730px;width:104px;height:28px"></div>
<div class="t" style="left:102.33px;top:735px;font-size:15.5px;color:#fff;transform:scaleX(1.0121);">config.txt</div>
<svg style="left:183px;top:742px" width="9.5" height="5" viewBox="0 0 10 6"><path d="M0 0 H10 L5 6 Z" fill="#c8c8c8"/></svg>
<div class="t" style="left:15.57px;top:771px;font-size:15.5px;color:#fff;transform:scaleX(0.9324);">Channel:</div>
<div class="combo" style="left:98px;top:766px;width:104px;height:28px"></div>
<div class="t" style="left:102.93px;top:771px;font-size:15.5px;color:#fff;transform:scaleX(0.9218);">L</div>
<svg style="left:183px;top:777.5px" width="9.5" height="5" viewBox="0 0 10 6"><path d="M0 0 H10 L5 6 Z" fill="#c8c8c8"/></svg>
<div class="t" style="left:15.66px;top:808px;font-size:15.5px;color:#fff;transform:scaleX(0.9738);">Resolution:</div>
<div class="inp" style="left:98px;top:803px;width:104px;height:27px;border-radius:4px;border-color:#141414"></div>
<div class="t" style="left:102.25px;top:808px;font-size:15.5px;color:#fff;transform:scaleX(0.9560);">65536</div>
<div class="b" style="left:185px;top:804px;width:16px;height:25px;background:linear-gradient(#525252,#484848);border-radius:0 3px 3px 0;box-shadow:inset 0 0 0 1px rgba(255,255,255,0.08);"></div>
<svg style="left:187.5px;top:808px" width="10" height="18" viewBox="0 0 10 18"><path d="M0 6 H10 L5 0.8 Z M0 11 H10 L5 16.4 Z" fill="#bdbdbd"/></svg>
<div class="t" style="left:1.95px;top:849px;font-size:15.5px;color:#fff;transform:scaleX(0.9821);">Estimated properties</div>
<div class="b" style="left:3px;top:870px;width:213px;height:127px;border:1px solid #303030;border-radius:3px;"></div>
<div class="t" style="left:15.71px;top:881px;font-size:15.5px;color:#fff;transform:scaleX(0.9368);">Peak gain:</div>
<div class="t" style="left:95.15px;top:881px;font-size:15.5px;color:#fff;transform:scaleX(0.9450);">-0.1 dB</div>
<div class="t" style="left:15.69px;top:909px;font-size:15.5px;color:#fff;transform:scaleX(0.9516);">Latency:</div>
<div class="t" style="left:94.66px;top:909px;font-size:15.5px;color:#fff;transform:scaleX(0.8999);">0.0 ms (0 s.)</div>
<div class="t" style="left:15.45px;top:936px;font-size:15.5px;color:#fff;transform:scaleX(1.0145);">Init. time:</div>
<div class="t" style="left:95.33px;top:936px;font-size:15.5px;color:#fff;transform:scaleX(0.9102);">12.6 ms</div>
<div class="t" style="left:15.59px;top:964px;font-size:15.5px;color:#fff;transform:scaleX(0.8959);">CPU usage:</div>
<div class="t" style="left:94.63px;top:964px;font-size:15.5px;color:#fff;transform:scaleX(0.9370);">0.1 % (one core)</div>
<svg style="left:1239px;top:677px" width="40" height="11" viewBox="0 0 40 11">
<g fill="none" stroke="#5a5a5a" stroke-width="1"><rect x="0.5" y="0.5" width="9" height="9"/><rect x="2.5" y="2.5" width="5" height="5"/>
<rect x="24.5" y="0.5" width="9" height="9"/><path d="M26.5 2.5 L31.5 7.5 M31.5 2.5 L26.5 7.5" stroke="#8a8a8a"/></g></svg>
<div class="b" style="left:217px;top:694px;width:41px;height:304px;background:#1b1b1b;"></div>
<div class="b" style="left:258px;top:695px;width:1005px;height:276px;background:#2d2d2d;"></div>
<svg style="left:0;top:0" width="1282" height="999" viewBox="0 0 1282 999"><g stroke="#676767" stroke-width="1" shape-rendering="crispEdges"><line x1="474.5" y1="695" x2="474.5" y2="971"/><line x1="501.5" y1="695" x2="501.5" y2="971"/><line x1="519.5" y1="695" x2="519.5" y2="971"/><line x1="534.5" y1="695" x2="534.5" y2="971"/><line x1="546.5" y1="695" x2="546.5" y2="971"/><line x1="556.5" y1="695" x2="556.5" y2="971"/><line x1="565.5" y1="695" x2="565.5" y2="971"/><line x1="573.5" y1="695" x2="573.5" y2="971"/><line x1="580.5" y1="695" x2="580.5" y2="971"/><line x1="625.5" y1="695" x2="625.5" y2="971"/><line x1="652.5" y1="695" x2="652.5" y2="971"/><line x1="671.5" y1="695" x2="671.5" y2="971"/><line x1="685.5" y1="695" x2="685.5" y2="971"/><line x1="697.5" y1="695" x2="697.5" y2="971"/><line x1="707.5" y1="695" x2="707.5" y2="971"/><line x1="716.5" y1="695" x2="716.5" y2="971"/><line x1="724.5" y1="695" x2="724.5" y2="971"/><line x1="731.5" y1="695" x2="731.5" y2="971"/><line x1="776.5" y1="695" x2="776.5" y2="971"/><line x1="803.5" y1="695" x2="803.5" y2="971"/><line x1="822.5" y1="695" x2="822.5" y2="971"/><line x1="836.5" y1="695" x2="836.5" y2="971"/><line x1="848.5" y1="695" x2="848.5" y2="971"/><line x1="858.5" y1="695" x2="858.5" y2="971"/><line x1="867.5" y1="695" x2="867.5" y2="971"/><line x1="875.5" y1="695" x2="875.5" y2="971"/><line x1="882.5" y1="695" x2="882.5" y2="971"/><line x1="927.5" y1="695" x2="927.5" y2="971"/><line x1="954.5" y1="695" x2="954.5" y2="971"/><line x1="973.5" y1="695" x2="973.5" y2="971"/><line x1="987.5" y1="695" x2="987.5" y2="971"/><line x1="999.5" y1="695" x2="999.5" y2="971"/><line x1="1009.5" y1="695" x2="1009.5" y2="971"/><line x1="1018.5" y1="695" x2="1018.5" y2="971"/><line x1="1026.5" y1="695" x2="1026.5" y2="971"/><line x1="1033.5" y1="695" x2="1033.5" y2="971"/><line x1="1078.5" y1="695" x2="1078.5" y2="971"/><line x1="429" y1="700.5" x2="1105" y2="700.5"/><line x1="429" y1="734.5" x2="1105" y2="734.5"/><line x1="429" y1="768.5" x2="1105" y2="768.5"/><line x1="429" y1="802.5" x2="1105" y2="802.5"/><line x1="429" y1="835.5" x2="1105" y2="835.5"/><line x1="429" y1="869.5" x2="1105" y2="869.5"/><line x1="429" y1="903.5" x2="1105" y2="903.5"/><line x1="429" y1="937.5" x2="1105" y2="937.5"/></g><polyline fill="none" stroke="#f0f0f0" stroke-width="1.3" points="429.0,802.5 560.0,802.5 599.3,802.3 625.5,802.9 638.6,805.1 652.8,807.7 671.4,809.9 685.6,810.6 697.6,810.6 708.5,811.9 716.2,812.3 731.5,811.4 750.0,809.3 776.3,807.1 803.6,805.3 820.0,804.4 829.0,805.3 847.1,804.6 860.7,805.5 883.3,808.0 908.2,808.5 921.8,809.4 943.3,808.9 955.7,806.9 959.1,807.1 969.3,810.3 977.2,808.7 984.0,812.3 995.3,814.8 1002.1,814.6 1010.0,816.6 1018.6,820.9 1025.9,822.5 1033.8,824.8 1050.8,828.8 1068.9,832.7 1089.2,836.3 1090.4,839.0 1091.0,860.5 1105.0,860.5"/></svg>
<div class="t" style="left:229.90px;top:690px;font-size:15.5px;color:#d8d8d8;transform:scaleX(0.9300);">60</div>
<div class="t" style="left:230.10px;top:724px;font-size:15.5px;color:#d8d8d8;transform:scaleX(0.9300);">40</div>
<div class="t" style="left:229.90px;top:758px;font-size:15.5px;color:#d8d8d8;transform:scaleX(0.9300);">20</div>
<div class="t" style="left:233.99px;top:792px;font-size:15.5px;color:#d8d8d8;transform:scaleX(0.9300);">0</div>
<div class="t" style="left:227.54px;top:825px;font-size:15.5px;color:#d8d8d8;transform:scaleX(0.9300);">-20</div>
<div class="t" style="left:227.54px;top:859px;font-size:15.5px;color:#d8d8d8;transform:scaleX(0.9300);">-40</div>
<div class="t" style="left:227.54px;top:893px;font-size:15.5px;color:#d8d8d8;transform:scaleX(0.9300);">-60</div>
<div class="t" style="left:227.54px;top:927px;font-size:15.5px;color:#d8d8d8;transform:scaleX(0.9300);">-80</div>
<div class="t" style="left:471.45px;top:975px;font-size:15.5px;color:#d8d8d8;transform:scaleX(0.9300);">2</div>
<div class="t" style="left:498.08px;top:975px;font-size:15.5px;color:#d8d8d8;transform:scaleX(0.9300);">3</div>
<div class="t" style="left:516.95px;top:975px;font-size:15.5px;color:#d8d8d8;transform:scaleX(0.9300);">4</div>
<div class="t" style="left:531.55px;top:975px;font-size:15.5px;color:#d8d8d8;transform:scaleX(0.9300);">5</div>
<div class="t" style="left:543.44px;top:975px;font-size:15.5px;color:#d8d8d8;transform:scaleX(0.9300);">6</div>
<div class="t" style="left:572.72px;top:975px;font-size:15.5px;color:#d8d8d8;transform:scaleX(0.9300);">10</div>
<div class="t" style="left:618.36px;top:975px;font-size:15.5px;color:#d8d8d8;transform:scaleX(0.9300);">20</div>
<div class="t" style="left:645.04px;top:975px;font-size:15.5px;color:#d8d8d8;transform:scaleX(0.9300);">30</div>
<div class="t" style="left:719.71px;top:975px;font-size:15.5px;color:#d8d8d8;transform:scaleX(0.9300);">100</div>
<div class="t" style="left:765.35px;top:975px;font-size:15.5px;color:#d8d8d8;transform:scaleX(0.9300);">200</div>
<div class="t" style="left:874.83px;top:975px;font-size:15.5px;color:#d8d8d8;transform:scaleX(0.9300);">1k</div>
<div class="t" style="left:920.47px;top:975px;font-size:15.5px;color:#d8d8d8;transform:scaleX(0.9300);">2k</div>
<div class="t" style="left:947.15px;top:975px;font-size:15.5px;color:#d8d8d8;transform:scaleX(0.9300);">3k</div>
<div class="t" style="left:1021.82px;top:975px;font-size:15.5px;color:#d8d8d8;transform:scaleX(0.9300);">10k</div>
<div class="t" style="left:1067.46px;top:975px;font-size:15.5px;color:#d8d8d8;transform:scaleX(0.9300);">20k</div>
<div class="b" style="left:1263px;top:695px;width:16px;height:301px;background:#434343;border-left:1px solid #525252;"></div>
<div class="b" style="left:1263px;top:760px;width:16px;height:218px;background:#4c4c4c;border:1px solid #606060;border-width:1px 0 1px 1px;"></div>
<div class="b" style="left:1263px;top:695px;width:16px;height:17px;background:#4a4a4a;border:1px solid #606060;border-width:0 0 1px 1px"></div>
<div class="b" style="left:1263px;top:712px;width:16px;height:1px;background:#202020;"></div>
<div class="b" style="left:1263px;top:979px;width:16px;height:17px;background:#4a4a4a;border:1px solid #606060;border-width:1px 0 0 1px"></div>
<div class="b" style="left:1263px;top:978px;width:16px;height:1px;background:#202020;"></div>
<svg style="left:1265.8px;top:699.8px" width="9.4" height="5.3" viewBox="0 0 10 5"><path d="M0 5 H10 L5 0 Z" fill="#cfcfcf"/></svg>
<svg style="left:1265.8px;top:985.2px" width="9.4" height="5.3" viewBox="0 0 10 5"><path d="M0 0 H10 L5 5 Z" fill="#cfcfcf"/></svg>
<div class="b" style="left:1280px;top:38px;width:1px;height:953px;background:#1c4f5b;opacity:0.3"></div>
<div class="b" style="left:0;top:30px;width:1282px;height:969px;border:solid #1c4f5b;border-width:0 1px 1px 1px;border-radius:0 0 8px 8px;"></div>
<div class="b" style="left:0;top:0;width:1282px;height:999px;border-radius:8px;box-shadow:0 0 0 30px #000;"></div>
</body></html>
